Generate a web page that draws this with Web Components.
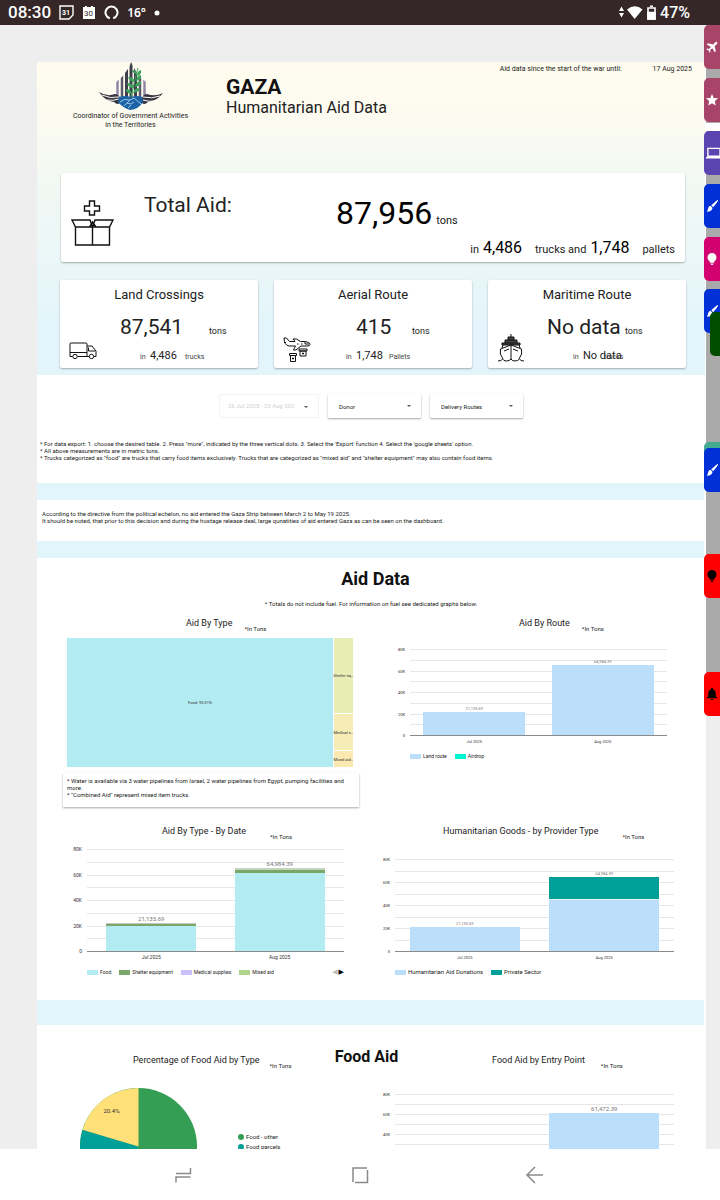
<!DOCTYPE html>
<html lang="en">
<head>
<meta charset="utf-8">
<meta name="viewport" content="width=device-width, initial-scale=1">
<title>Gaza Humanitarian Aid Data</title>
<style>
  html, body { height: 100%; }
  body {
    margin: 0;
    display: flex;
    flex-direction: column;
    background: #fff;
    color: #222;
    font-family: Roboto, "Liberation Sans", sans-serif;
  }
  main {
    flex: 1;
    min-height: 0;
    position: relative;
    overflow: hidden;
    background: #eeeeee;
  }
</style>
</head>
<body>
<status-bar></status-bar>

<main>
  <report-sheet>
    <report-hero>
      <total-card></total-card>
      <route-card heading="Land Crossings" icon="truck" value="87,541" count="4,486" unit="trucks"
        style="--value-start: 60px; --value-slot: 89px; --count-start: 80px; --count-slot: 35px"></route-card>
      <route-card heading="Aerial Route" icon="plane" value="415" count="1,748" unit="Pallets"
        style="--value-start: 82px; --value-slot: 56px; --count-start: 72px; --count-slot: 33px"></route-card>
      <route-card heading="Maritime Route" icon="ship" value="No data" count="No data" unit="trucks"
        style="--value-start: 59px; --value-slot: 78px; --count-start: 85px; --count-slot: 21px"></route-card>
    </report-hero>

    <filter-bar></filter-bar>

    <report-note class="export">* For data export: 1. choose the desired table. 2. Press "more", indicated by the three vertical dots. 3. Select the 'Export' function 4. Select the 'google sheets' option.<br>* All above measurements are in metric tons.<br>* Trucks categorized as "food" are trucks that carry food items exclusively. Trucks that are categorized as "mixed aid" and "shelter equipment" may also contain food items.</report-note>

    <section-band></section-band>

    <report-note class="directive">According to the directive from the political echelon, no aid entered the Gaza Strip between March 2 to May 19 2025.<br>It should be noted, that prior to this decision and during the hostage release deal, large qunatities of aid entered Gaza as can be seen on the dashboard.</report-note>

    <section-band></section-band>

    <report-section heading="Aid Data">
      <span slot="sub">* Totals do not include fuel. For information on fuel see dedicated graphs below.</span>
      <chart-panel heading="Aid By Type" style="--title-start: 149px; --title-gap: 12px">
        <tree-map></tree-map>
        <note-card>* Water is available via 3 water pipelines from Israel, 2 water pipelines from Egypt, pumping facilities and more.<br>* "Combined Aid" represent mixed item trucks.</note-card>
      </chart-panel>
      <chart-panel heading="Aid By Route" style="--title-start: 148px; --title-gap: 12px">
        <bar-chart name="route"></bar-chart>
      </chart-panel>
      <chart-panel heading="Aid By Type - By Date" style="--title-start: 125px; --title-gap: 24px">
        <bar-chart name="date"></bar-chart>
      </chart-panel>
      <chart-panel heading="Humanitarian Goods - by Provider Type" style="--title-start: 72px; --title-gap: 24px">
        <bar-chart name="provider"></bar-chart>
      </chart-panel>
    </report-section>

    <section-band tall></section-band>

    <report-section heading="Food Aid" inline-heading>
      <chart-panel heading="Percentage of Food Aid by Type" style="--title-start: 96px; --title-gap: 10px">
        <pie-chart></pie-chart>
      </chart-panel>
      <chart-panel heading="Food Aid by Entry Point" style="--title-start: 121px; --title-gap: 16px">
        <bar-chart name="entry"></bar-chart>
      </chart-panel>
    </report-section>
  </report-sheet>

  <edge-dock></edge-dock>
</main>

<nav-bar></nav-bar>

<script>
// Shared base: puts the markup of template() in an open shadow root
class ViewElement extends HTMLElement {
  constructor() {
    super();
    this.attachShadow({ mode: "open" });
  }

  connectedCallback() {
    this.shadowRoot.innerHTML = this.template();
  }
}

class StatusBar extends ViewElement {
  template() {
    return `
      <style>
        :host {
          display: flex;
          align-items: center;
          height: 25px;
          padding: 0 30px 0 8px;
          background: #352728;
          color: #fff;
          font-size: 17px;
          font-weight: 500;
          line-height: 25px;
        }
        svg { display: block; }
        .left { display: flex; align-items: center; gap: 8px; flex: 1; }
        .temp { font: 600 12px/25px "Noto Sans", sans-serif; }
        .right { display: flex; align-items: center; gap: 4px; font-size: 16px; }
      </style>
      <div class="left">
        <span>08:30</span>
        <svg width="15" height="15" viewBox="0 0 15 15" fill="none" stroke="#fff">
          <path d="M1 1h13v9l-4 4H1z" stroke-width="1.4"/>
          <text x="3" y="10" font-size="7" font-weight="700" fill="#fff" stroke="none">31</text>
        </svg>
        <svg width="14" height="14" viewBox="0 0 14 14">
          <path d="M1 1h2V0h2v1h4V0h2v1h2v12H1z" fill="#fff"/>
          <text x="2" y="10" font-size="8" font-weight="400" fill="#352728">30</text>
        </svg>
        <svg width="15" height="15" viewBox="0 0 15 15" fill="none" stroke="#fff" stroke-width="2">
          <path d="M5.800 13.300A6 6 0 1 1 9.200 13.300"/>
        </svg>
        <span class="temp">16°</span>
        <svg width="6" height="6"><circle cx="3" cy="3" r="2.5" fill="#fff"/></svg>
      </div>
      <div class="right">
        <svg width="24" height="15" viewBox="0 0 24 15" fill="#fff">
          <path d="M0 6 2.5 1.500 5 6zM0 8h5L2.500 12.500z"/>
          <path d="M8 4.500Q16 -2 23.500 4.500L15.700 14z"/>
        </svg>
        <svg width="9" height="15" viewBox="0 0 9 15" fill="none" stroke="#fff" stroke-width="1.6">
          <path d="M1 3h7v11H1zM3 1.200h3"/><path d="M1 7.500h7V14H1z" fill="#fff"/>
        </svg>
        <span>47%</span>
      </div>`;
  }
}

class ReportSheet extends ViewElement {
  template() {
    return `
      <style>
        :host {
          display: block;
          margin: 37px 14px 0 37px;
          padding-right: 1px;
          background: #fff;
        }
        ::slotted(.export) { padding: 22px 3px; }
        ::slotted(.directive) { padding: 10px 5px 17px; }
      </style>
      <slot></slot>`;
  }
}

class ReportHero extends ViewElement {
  template() {
    return `
      <style>
        :host {
          display: block;
          background: linear-gradient(#fffcef, #fdfbf0 15%, #f1f8f4 42%, #e3f5fb 85%);
          padding-bottom: 7px;
        }
        header {
          display: grid;
          grid-template-columns: 187px 1fr auto;
          column-gap: 2px;
          height: 111px;
        }
        .logo {
          display: flex;
          flex-direction: column;
          align-items: center;
          font-size: 7px;
          line-height: 9px;
          text-align: center;
        }
        .logo svg { display: block; margin-bottom: 2px; }
        h1 { margin: 0; padding-top: 13px; font-size: 21px; line-height: 24px; color: #111; }
        .name p { margin: 0; font-size: 16px; line-height: 18px; }
        .date { display: flex; gap: 31px; padding: 2px 13px 0 0; font-size: 7px; line-height: 10px; }
        .cards {
          display: grid;
          grid-template-columns: repeat(3, 1fr);
          gap: 18px 16px;
          padding: 0 19px 0 23px;
        }
        ::slotted(total-card) { grid-column: 1 / -1; }
      </style>
      <header>
        <div class="logo">
          <svg width="64" height="48" viewBox="0 0 64 48">
            <defs>
              <clipPath id="flame">
                <path d="M32 0C36 8 38 11 40 14L47 20V38H17V20L24 14C27 9 30 7 32 0z"/>
              </clipPath>
            </defs>
            <g clip-path="url(#flame)">
              <path d="M32 0v36M27.500 3v35M36.500 3v35" stroke="#403f4c" stroke-width="3"/>
              <path d="M23 10v26M41 10v26" stroke="#5b586a" stroke-width="2.500"/>
              <path d="M18.500 18v18M45.500 18v18" stroke="#8d87a5" stroke-width="2.500"/>
            </g>
            <path d="M32 36Q35 20 39 6" stroke="#3da35c" fill="none"/>
            <path d="M38 12q-5-1-5-4 4 0 5 4zM38 14q5-1 4-6-4 1-4 6zM36 20q-6 0-7-5 6 0 7 5zM37 19q6-1 5-6-5 1-5 6zM35 26q-6 0-7-5 6 0 7 5zM36 25q7-1 6-6-6 1-6 6zM33 32q-6 0-6-5 5 0 6 5zM34 31q7-1 7-5-6 0-7 5z" fill="#3da35c"/>
            <path d="M0 30q8 5 16 2 5 0 6 8-3 4-7 0-9-1-15-10zM64 31q-8 4-16 1-5 0-6 8 3 4 7 0 9-1 15-9z" fill="#383743"/>
            <path d="M3 33q8 4 17 2M8 38q6 1 12-1M61 34q-8 3-17 1M56 39q-6 1-12-1" stroke="#fbfaf0" fill="none"/>
            <path d="M20 35q6-2 12 0 6-2 11 0l1 5q-4 7-13 8-7-2-12-8z" fill="#1c64a6"/>
            <path d="M21 40q4-4 10-2l4-2 7 6M25 44l3-3M29 46l3-3M31 38l-3 3 4 1 3-2" stroke="#9cc5e4" fill="none"/>
          </svg>
          <span>Coordinator of Government Activities<br>in the Territories</span>
        </div>
        <div class="name">
          <h1>GAZA</h1>
          <p>Humanitarian Aid Data</p>
        </div>
        <div class="date"><span>Aid data since the start of the war until:</span><time datetime="2025-08-17">17 Aug 2025</time></div>
      </header>
      <div class="cards"><slot></slot></div>`;
  }
}

class TotalCard extends ViewElement {
  template() {
    return `
      <style>
        :host {
          display: grid;
          grid-template-columns: 83px 192px 1fr;
          grid-template-rows: 60px 1fr;
          height: 89px;
          margin: 0 1px;
          background: #fff;
          border-radius: 2px;
          box-shadow: 0 1px 2px rgba(0, 0, 0, 0.3);
        }
        svg { display: block; grid-row: 1 / -1; padding: 27px 0 0 10px; }
        h2 { margin: 0; padding-top: 20px; font-size: 21px; font-weight: 400; line-height: 25px; }
        .tons { display: flex; align-items: baseline; gap: 4px; padding-top: 20px; font-size: 11px; line-height: 40px; color: #222; }
        .tons b { font-size: 32px; font-weight: 400; color: #000; }
        .split {
          grid-column: 2 / -1;
          display: flex;
          justify-content: flex-end;
          align-items: baseline;
          gap: 4px;
          padding: 5px 10px 0 0;
          font-size: 11px;
          line-height: 20px;
        }
        .split b { width: 48px; font-size: 16px; font-weight: 400; color: #000; }
      </style>
      <svg width="43" height="47" viewBox="0 0 43 47" fill="none" stroke="#111" stroke-width="1.400">
        <path d="M18.500 1h5v5h5v5h-5v4h-5v-4h-5V6h5z"/>
        <path d="M4.500 27v18h34V27M21.500 27v18M4.500 27h34M1 20h18l2.500 7L24 20h18l-3.500 7H25l-3.500-5-3 5h-14z"/>
      </svg>
      <h2>Total Aid:</h2>
      <div class="tons"><b>87,956</b><span>tons</span></div>
      <div class="split"><span>in</span><b>4,486</b><span>trucks and</span><b>1,748</b><span>pallets</span></div>`;
  }
}

const ROUTE_ICONS = {
  truck: `<path d="M3.500 23.500H1V11q0-1 1-1h15q1 0 1 1v12.500H8.500M1 19.500h17M18 13h5l4 5v5.500h-2M18 23.500h2M19.500 14.500V18H26"/>
    <circle cx="6" cy="23.500" r="2.200"/><circle cx="22.500" cy="23.500" r="2.200"/>`,
  plane: `<path d="M1 5h2.500l3 3.500H12L10 6h3.500l4 2.500H22q5 .5 5 3 0 1.500-3 1.500h-6l-5 4h-2.500l2-4H6Q1 12 1 5zM22 9v2h4M14 11h1.500M18 11h1.500M1 9.500h2"/>
    <path d="M6.500 20.500h7v2h-7zM7.500 22.500h5v6h-5zM16 16h8v2h-8zM17 18h6v5h-6zM9 25.500h2M10 24.500v2M19 20.500h2M20 19.500v2"/>`,
  ship: `<path d="M5 12h18v-2H5zM8 10V7h12v3M11 7V4h6v3M14 4V1" fill="#444"/>
    <path d="M6 26Q2 21 3.500 16L14 12l10.500 4Q26 21 22 26M14 12v14M6 12l-1 3M22 12l1 3M1 28q3.500 0 4.500-2 1 2 4 2t4.500-2q1 2 4 2t4.500-2q1 2 4.500 2M7 18l5-2M21 18l-5-2"/>`,
};

class RouteCard extends ViewElement {
  template() {
    const get = (name) => this.getAttribute(name);
    return `
      <style>
        :host {
          display: grid;
          grid-template-rows: 29px 36px 1fr;
          height: 88px;
          background: #fff;
          border-radius: 2px;
          box-shadow: 0 1px 2px rgba(0, 0, 0, 0.3);
        }
        :host > * { grid-column: 1; }
        h3 { margin: 0; font-size: 13px; font-weight: 400; line-height: 29px; text-align: center; }
        .icon { display: block; grid-row: 1 / -1; grid-column: 1; align-self: end; padding: 0 0 5px 9px; }
        .row { display: flex; align-items: baseline; white-space: nowrap; }
        .value { padding-left: var(--value-start); font-size: 9px; line-height: 36px; }
        .value b { width: var(--value-slot); font-size: 21px; font-weight: 400; }
        .count { padding-left: var(--count-start); font-size: 7px; line-height: 22px; color: #444; }
        .count i { width: 10px; font-style: normal; }
        .count b { width: var(--count-slot); font-size: 11px; font-weight: 400; color: #222; }
        h3 { grid-area: 1 / 1; }
        .value { grid-area: 2 / 1; }
        .count { grid-area: 3 / 1; }
      </style>
      <svg class="icon" width="28" height="30" viewBox="0 0 28 30" fill="none" stroke="#111">${ROUTE_ICONS[get("icon")]}</svg>
      <h3>${get("heading")}</h3>
      <div class="row value"><b>${get("value")}</b><span>tons</span></div>
      <div class="row count"><i>in</i><b>${get("count")}</b><span>${get("unit")}</span></div>`;
  }
}

class FilterBar extends ViewElement {
  template() {
    return `
      <style>
        :host { display: flex; justify-content: center; gap: 9px; padding-top: 19px; }
        label, button {
          position: relative;
          box-sizing: border-box;
          width: 93px;
          height: 24px;
          background: #fff;
          border-radius: 1px;
          box-shadow: 0 1px 2px rgba(0, 0, 0, 0.35);
        }
        select {
          appearance: none;
          width: 100%;
          height: 100%;
          padding: 0 11px;
          border: 0;
          background: none;
          color: #222;
          font: 6px/24px Roboto, sans-serif;
        }
        button {
          width: 100px;
          padding: 0 8px;
          border: 1px solid #f3f3f3;
          box-shadow: none;
          color: #cfcfcf;
          font: 6px/22px Roboto, sans-serif;
          text-align: left;
          white-space: nowrap;
        }
        label::after, button::after {
          content: "";
          position: absolute;
          right: 10px;
          top: 11px;
          border: 2px solid transparent;
          border-top-color: #555;
          border-bottom: 0;
        }
      </style>
      <button type="button" disabled>26 Jul 2025 - 23 Aug 202</button>
      <label><select aria-label="Donor"><option>Donor</option></select></label>
      <label><select aria-label="Delivery Routes"><option>Delivery Routes</option></select></label>`;
  }
}

class ReportNote extends ViewElement {
  template() {
    return `
      <style>
        :host { display: block; font-size: 6px; line-height: 7px; color: #222; }
      </style>
      <slot></slot>`;
  }
}

class NoteCard extends ViewElement {
  template() {
    return `
      <style>
        :host {
          display: block;
          box-sizing: border-box;
          min-height: 34px;
          margin: 6px 12px 0 26px;
          padding: 4px;
          font-size: 6px;
          line-height: 7px;
          box-shadow: 0 1px 2px rgba(0, 0, 0, 0.35);
        }
      </style>
      <slot></slot>`;
  }
}

class SectionBand extends ViewElement {
  template() {
    return `
      <style>
        :host { display: block; height: 17px; margin-right: 1px; background: #e1f5fb; }
        :host([tall]) { height: 25px; }
      </style>`;
  }
}

class ReportSection extends ViewElement {
  template() {
    return `
      <style>
        :host {
          display: grid;
          grid-template-columns: 1fr 1fr;
          row-gap: 17px;
          padding: 10px 0 24px;
        }
        .head { grid-column: 1 / -1; text-align: center; margin-bottom: -9px; }
        h2 { margin: 0; padding-left: 9px; font-size: 18px; line-height: 22px; color: #111; }
        .sub { display: block; padding-top: 10px; font-size: 6px; line-height: 8px; }
        /* heading shares its row with the panel titles */
        :host([inline-heading]) { padding-top: 21px; }
        :host([inline-heading]) .head { grid-row: 1; margin: 0; }
        :host([inline-heading]) .sub { display: none; }
        :host([inline-heading]) ::slotted(chart-panel) { grid-area: 1 / 2; padding-top: 7px; }
        :host([inline-heading]) ::slotted(chart-panel:first-of-type) { grid-area: 1 / 1; }
        :host([inline-heading]) h2 { padding: 0 9px 0 0; font-size: 16px; }
      </style>
      <div class="head">
        <h2>${this.getAttribute("heading")}</h2>
        <span class="sub"><slot name="sub"></slot></span>
      </div>
      <slot></slot>`;
  }
}

class ChartPanel extends ViewElement {
  template() {
    return `
      <style>
        :host { display: block; min-width: 0; }
        header {
          display: flex;
          gap: var(--title-gap);
          height: 17px;
          padding-left: var(--title-start);
          white-space: nowrap;
        }
        h3 { margin: 0; font-size: 9px; font-weight: 400; line-height: 15px; }
        small { align-self: flex-end; font-size: 6px; line-height: 8px; }
      </style>
      <header><h3>${this.getAttribute("heading")}</h3><small>*In Tons</small></header>
      <slot></slot>`;
  }
}

class TreeMap extends ViewElement {
  template() {
    return `
      <style>
        :host {
          display: grid;
          grid-template-columns: 266px 1fr;
          grid-template-rows: 75fr 36fr 16fr;
          gap: 1px;
          height: 129px;
          margin: 5px 18px 0 30px;
          font-size: 4px;
          color: #333;
        }
        div { display: flex; align-items: center; justify-content: center; white-space: nowrap; min-width: 0; }
        .food { grid-row: 1 / -1; background: #b2ebf2; }
        .shelter { background: #e8edb5; }
        .medical { background: #f5edb5; }
        .mixed { background: #fce9b2; }
      </style>
      <div class="food">Food: 93.01%</div>
      <div class="shelter">Shelter eq…</div>
      <div class="medical">Medical s…</div>
      <div class="mixed">Mixed aid…</div>`;
  }
}

// Plot boxes are in the units of a 334 wide view; a bar is a list of [value, colour] from the axis up
const CHARTS = {
  route: {
    left: 39, width: 257, top: 15, height: 86, barWidth: 102, labelSize: 4, totalSize: 4, legendSize: 5,
    bars: [
      { month: "Jul 2025", total: "21,135.69", parts: [[21136, "#bbdefb"]] },
      { month: "Aug 2025", total: "64,984.39", parts: [[64984, "#bbdefb"]] },
    ],
    legend: [["Land route", "#bbdefb"], ["Airdrop", "#00f5d0"]],
  },
  date: {
    left: 50, width: 257, top: 7, height: 102, barWidth: 90, labelSize: 5, totalSize: 6, legendSize: 5,
    bars: [
      { month: "Jul 2025", total: "21,135.69", parts: [[19300, "#b2ebf2"], [1200, "#7aa768"], [636, "#c2c9c4"]] },
      { month: "Aug 2025", total: "64,984.39", parts: [[61472, "#b2ebf2"], [2000, "#7aa768"], [1512, "#c2d6bd"]] },
    ],
    legend: [["Food", "#b2ebf2"], ["Shelter equipment", "#7aa768"], ["Medical supplies", "#cbbffc"], ["Mixed aid", "#aed68c"]],
    pager: true,
  },
  provider: {
    left: 24, width: 279, top: 17, height: 92, barWidth: 110, labelSize: 4, totalSize: 4, legendSize: 6,
    bars: [
      { month: "Jul 2025", total: "21,135.69", parts: [[20600, "#bbdefb"]] },
      { month: "Aug 2025", total: "64,984.39", parts: [[44600, "#bbdefb"], [900, "#e9f4fb"], [19484, "#009f97"]] },
    ],
    legend: [["Humanitarian Aid Donations", "#bbdefb"], ["Private Sector", "#009f97"]],
  },
  entry: {
    left: 24, width: 279, top: 23, height: 80, barWidth: 110, labelSize: 4, totalSize: 6, legendSize: 6,
    bars: [
      { month: "Jul 2025", total: "", parts: [[19300, "#bbdefb"]] },
      { month: "Aug 2025", total: "61,472.39", parts: [[61472, "#bbdefb"]] },
    ],
    legend: [],
  },
};

class BarChart extends ViewElement {
  grid(c) {
    let out = "";
    for (let step = 0; step <= 8; step++) {
      const y = Math.round(c.top + c.height - (c.height * step) / 8);
      const stroke = step ? "#e6e6e6" : "#8a8a8a";
      out += `<path d="M${c.left} ${y + 0.5}h${c.width}" stroke="${stroke}"/>`;
      if (step % 2 === 0) {
        const label = step ? `${step * 10}K` : "0";
        out += `<text x="${c.left - 5}" y="${y + 2}" text-anchor="end" font-size="${c.labelSize}">${label}</text>`;
      }
    }
    return out;
  }

  bar(c, bar, index) {
    const base = c.top + c.height;
    const mid = c.left + (c.width * (index * 2 + 1)) / 4;
    let y = base;
    let out = "";
    bar.parts.forEach(([value, color]) => {
      const h = Math.max(1, Math.round((value / 80000) * c.height));
      y -= h;
      out += `<rect x="${Math.round(mid - c.barWidth / 2)}" y="${y}" width="${c.barWidth}" height="${h}" fill="${color}"/>`;
    });
    out += `<text x="${mid}" y="${y - 2}" text-anchor="middle" font-size="${c.totalSize}" fill="#777">${bar.total}</text>`;
    out += `<text x="${mid}" y="${base + 8}" text-anchor="middle" font-size="${c.labelSize}">${bar.month}</text>`;
    return out;
  }

  template() {
    const c = CHARTS[this.getAttribute("name")];
    const keys = c.legend
      .map(([label, color]) => `<li><i style="background: ${color}"></i>${label}</li>`)
      .join("");
    const pager = c.pager
      ? `<nav><button type="button" aria-label="Previous" disabled>◀</button><button type="button" aria-label="Next">▶</button></nav>`
      : "";
    return `
      <style>
        :host { display: block; padding-top: 1px; }
        svg { display: block; width: 100%; fill: #333; }
        footer { display: flex; align-items: center; height: 8px; padding: 4px 27px 0 ${c.left}px; }
        ul {
          display: flex;
          flex: 1;
          gap: 8px;
          margin: 0;
          padding: 0;
          list-style: none;
          font-size: ${c.legendSize}px;
          line-height: 8px;
          white-space: nowrap;
        }
        li { display: flex; align-items: center; gap: 2px; }
        i { width: 11px; height: 5px; }
        nav { display: flex; gap: 1px; }
        button {
          padding: 0;
          border: 0;
          background: none;
          color: #000;
          font: 7px/8px "DejaVu Sans", sans-serif;
        }
        button:disabled { color: #bbb; }
      </style>
      <svg viewBox="0 0 334 ${c.top + c.height + 13}" role="img">
        ${this.grid(c)}
        ${c.bars.map((bar, i) => this.bar(c, bar, i)).join("")}
      </svg>
      <footer><ul>${keys}</ul>${pager}</footer>`;
  }
}

class PieChart extends ViewElement {
  template() {
    return `
      <style>
        :host { display: flex; gap: 41px; padding: 18px 0 0 43px; }
        svg { display: block; flex: none; }
        ul { margin: 0; padding: 44px 0 0; list-style: none; font-size: 6px; line-height: 10px; }
        li { display: flex; align-items: center; gap: 2px; }
        i { width: 6px; height: 6px; border-radius: 50%; }
      </style>
      <svg width="117" height="117" viewBox="-58.500 -58.500 117 117" role="img">
        <circle r="58.500" fill="#349e55"/>
        <path d="M0 0L-56.060 -16.710A58.500 58.500 0 0 0 -34 47.600z" fill="#009f97"/>
        <path d="M0 0V-58.500A58.500 58.500 0 0 0 -56.060 -16.710z" fill="#ffe079"/>
        <text x="-27" y="-34" text-anchor="middle" font-size="6" fill="#333">20.4%</text>
      </svg>
      <ul>
        <li><i style="background: #349e55"></i>Food - other</li>
        <li><i style="background: #009f97"></i>Food parcels</li>
      </ul>`;
  }
}

const TAB_ICONS = {
  plane: `<path d="M15 1.500q-1.500-1-3 .5L9.500 4.500 2.500 3 1 4.500l5.500 3L4 10.500 1.500 10 .5 11l3 1.500L5 15.500l1-1-.5-2.500 3-2.500 3 5.500 1.500-1.500-1.500-7L14 4.500q1.500-1.500 1-3z"/>`,
  star: `<path d="M8 0l2.300 5.300 5.700.5-4.300 3.800 1.300 5.600L8 12.200l-5 3 1.300-5.600L0 5.800l5.700-.5z"/>`,
  laptop: `<path d="M2 2.500h13v8.500H2zM0 12.500h17" fill="none" stroke="currentColor" stroke-width="1.500"/>`,
  brush: `<path d="M16 0Q17 1 9.500 9.500L7 7Q14.500 0 16 0zM6 7.800 8.700 10.500Q8 15 1 15.500 2.500 14 2.800 11 3.500 8 6 7.800z"/>`,
  bulb: `<circle cx="8" cy="6" r="6"/><path d="M5 11h6v2H5zM6 14h4l-1 2H7z"/>`,
  bell: `<path d="M8 0q1.500 0 1.500 1.500Q13 3 13 7v4l2.500 2.500H.5L3 11V7q0-4 3.500-5.500Q6.500 0 8 0zM6 14.500h4Q9.500 16 8 16t-2-1.500z"/>`,
};

// Shortcut tabs float over the page edge, each at its own height
const TABS = [
  { top: 0, color: "#a84468", icon: "plane", label: "Travel" },
  { top: 53, color: "#a84468", icon: "star", label: "Favourites" },
  { top: 106, color: "#5a44b0", icon: "laptop", size: 15, label: "Devices" },
  { top: 159, color: "#0030d6", icon: "brush", label: "Draw" },
  { top: 212, color: "#d3006f", icon: "bulb", label: "Ideas" },
  { top: 264, color: "#0030d6", icon: "brush", label: "Paint" },
  { top: 287, color: "#004d00", narrow: true, label: "More" },
  { top: 417, color: "#44aa90", label: "Notes" },
  { top: 423, color: "#0030d6", icon: "brush", label: "Sketch" },
  { top: 529, color: "#ff0000", ink: "#000", icon: "bulb", label: "Light" },
  { top: 647, color: "#ff0000", ink: "#000", icon: "bell", label: "Alerts" },
];

class EdgeDock extends ViewElement {
  template() {
    const tabs = TABS.map((tab) => {
      const size = tab.size || 12;
      const icon = tab.icon
        ? `<svg width="${size}" height="${size}" viewBox="0 0 16 16" fill="currentColor">${TAB_ICONS[tab.icon]}</svg>`
        : "";
      return `<button type="button" aria-label="${tab.label}" class="${tab.narrow ? "narrow" : ""}"
        style="top: ${tab.top}px; background: ${tab.color}; color: ${tab.ink || "#fff"}">${icon}</button>`;
    }).join("");
    return `
      <style>
        :host { position: absolute; top: 0; right: 0; width: 16px; height: 100%; }
        .track {
          width: 14px;
          height: 650px;
          margin-left: 2px;
          background: linear-gradient(#aaa 98px, #fff 98px 106px, #aaa 106px);
        }
        button {
          position: absolute;
          right: 0;
          display: flex;
          align-items: center;
          width: 16px;
          height: 44px;
          padding: 0 0 0 2px;
          border: 0;
          border-radius: 5px 0 0 5px;
          overflow: hidden;
        }
        button.narrow { width: 10px; }
        svg { flex: none; }
      </style>
      <div class="track"></div>
      ${tabs}`;
  }
}

class NavBar extends ViewElement {
  template() {
    return `
      <style>
        :host { display: flex; justify-content: center; align-items: center; gap: 154px; height: 51px; background: #fff; }
        button { width: 22px; height: 22px; padding: 0; border: 0; background: none; }
        svg { display: block; fill: none; stroke: #8a8a8a; stroke-width: 1.500; }
      </style>
      <button type="button" aria-label="Recent apps"><svg width="22" height="22"><path d="M3 9.500h14.500V4M3 18.500V13h14.500"/></svg></button>
      <button type="button" aria-label="Home"><svg width="22" height="22"><path d="M18 4H4v14M6 18.500h12.500V6"/></svg></button>
      <button type="button" aria-label="Back"><svg width="22" height="22"><path d="M18 11H2M10 3l-8 8 8 8"/></svg></button>`;
  }
}

customElements.define("status-bar", StatusBar);
customElements.define("report-sheet", ReportSheet);
customElements.define("report-hero", ReportHero);
customElements.define("total-card", TotalCard);
customElements.define("route-card", RouteCard);
customElements.define("filter-bar", FilterBar);
customElements.define("report-note", ReportNote);
customElements.define("note-card", NoteCard);
customElements.define("section-band", SectionBand);
customElements.define("report-section", ReportSection);
customElements.define("chart-panel", ChartPanel);
customElements.define("tree-map", TreeMap);
customElements.define("bar-chart", BarChart);
customElements.define("pie-chart", PieChart);
customElements.define("edge-dock", EdgeDock);
customElements.define("nav-bar", NavBar);
</script>
</body>
</html>
